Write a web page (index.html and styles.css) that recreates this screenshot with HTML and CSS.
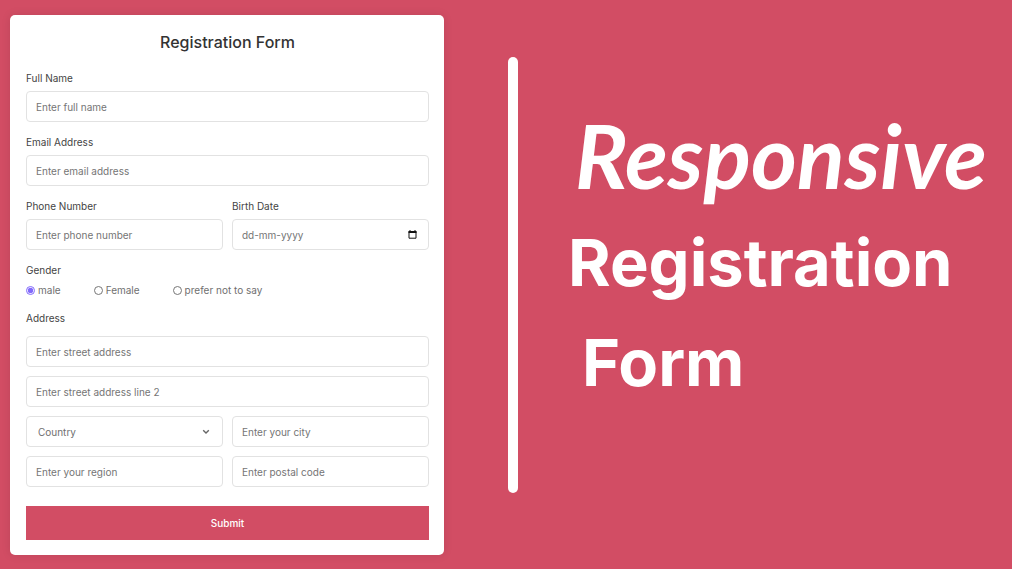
FILE: index.html
```html
<!DOCTYPE html>
<html lang="en">
<head>
<meta charset="utf-8">
<meta name="viewport" content="width=device-width, initial-scale=1">
<title>Responsive Registration Form</title>
<link rel="stylesheet" href="styles.css">
</head>
<body class="page">
<section class="card">
  <h1 class="card-title">Registration Form</h1>
  <form class="form">
    <div class="field">
      <label class="label" for="name">Full Name</label>
      <input class="control" id="name" type="text" placeholder="Enter full name">
    </div>
    <div class="field">
      <label class="label" for="email">Email Address</label>
      <input class="control" id="email" type="email" placeholder="Enter email address">
    </div>
    <div class="columns">
      <div class="field">
        <label class="label" for="phone">Phone Number</label>
        <input class="control" id="phone" type="tel" placeholder="Enter phone number">
      </div>
      <div class="field">
        <label class="label" for="birth">Birth Date</label>
        <div class="control-wrap">
          <input class="control" id="birth" type="text" placeholder="dd-mm-yyyy">
          <svg class="calendar" viewBox="0 0 9 9" aria-hidden="true"><path d="M1 1.5h7v6.700H1z" fill="none" stroke="#111"/><path d="M.5 1h8v2h-8zM1.500 0h1v1h-1zM6.500 0h1v1h-1z" fill="#111"/></svg>
        </div>
      </div>
    </div>
    <fieldset class="gender">
      <legend class="label">Gender</legend>
      <div class="options">
        <label class="option"><input class="radio" type="radio" name="gender" checked>male</label>
        <label class="option"><input class="radio" type="radio" name="gender">Female</label>
        <label class="option"><input class="radio" type="radio" name="gender">prefer not to say</label>
      </div>
    </fieldset>
    <div class="address">
      <label class="label" for="street">Address</label>
      <input class="control" id="street" type="text" placeholder="Enter street address">
      <input class="control" type="text" aria-label="Street address line 2" placeholder="Enter street address line 2">
      <div class="columns">
        <div class="control-wrap">
          <select class="control select" aria-label="Country"><option>Country</option></select>
          <svg class="chevron" viewBox="0 0 8 6" aria-hidden="true"><path d="M1.200 1.300 4 4.100l2.800-2.800" fill="none" stroke="#666" stroke-width="1.400"/></svg>
        </div>
        <input class="control" type="text" aria-label="City" placeholder="Enter your city">
      </div>
      <div class="columns">
        <input class="control" type="text" aria-label="Region" placeholder="Enter your region">
        <input class="control" type="text" aria-label="Postal code" placeholder="Enter postal code">
      </div>
    </div>
    <button class="submit" type="submit">Submit</button>
  </form>
</section>
<div class="divider"></div>
<h2 class="headline">
  <span class="line script">Responsive</span>
  <span class="line">Registration</span>
  <span class="line indent">Form</span>
</h2>
</body>
</html>
```
FILE: styles.css
```css
* { box-sizing: border-box; }
.page {
  margin: 0;
  min-height: 100vh;
  padding: 15px 10px 13px;
  display: flex;
  align-items: flex-start;
  background: #d24d64;
  font-family: Inter, "Open Sans", sans-serif;
  font-size: 10px;
}
.card {
  flex: 0 0 434px;
  padding: 15px 15px 15px 16px;
  background: #fff;
  border-radius: 5px;
  box-shadow: 0 0 10px rgba(0, 0, 0, .1);
}
.card-title {
  margin: 0 0 16px;
  font-size: 16px;
  line-height: 24px;
  font-weight: 500;
  text-align: center;
  color: #333;
}
.form { display: flex; flex-direction: column; gap: 12px; }
.field { display: flex; flex-direction: column; gap: 5px; }
.label { display: block; padding: 0; line-height: 16px; color: #444; }
.control {
  width: 100%;
  height: 31px;
  padding: 0 9px;
  border: 1px solid #e2e2e2;
  border-radius: 4px;
  background: #fff;
  font: inherit;
  color: #707070;
}
.control::placeholder { color: #757575; opacity: 1; }
.columns { display: grid; grid-template-columns: 1fr 1fr; gap: 9px; }
.control-wrap { position: relative; }
.calendar { position: absolute; right: 12px; top: 11px; width: 9px; height: 9px; }
.select { appearance: none; padding: 0 11px; }
.chevron { position: absolute; right: 13px; top: 13px; width: 8px; height: 6px; }
.gender { margin: 0; padding: 0; border: 0; min-width: 0; }
.options { display: flex; gap: 33px; padding-top: 4px; }
.option { display: flex; align-items: center; gap: 3px; line-height: 16px; color: #707070; }
.radio { width: 9px; height: 9px; margin: 0; accent-color: #826afb; }
.address { display: flex; flex-direction: column; gap: 9px; }
.address .label { margin-bottom: 1px; }
.submit {
  height: 34px;
  margin-top: 7px;
  border: 0;
  background: #d24d64;
  color: #fff;
  font: inherit;
  font-weight: 500;
}
.divider {
  flex: 0 0 10px;
  height: 436px;
  margin: 42px 50px 0 64px;
  border-radius: 5px;
  background: #fff;
}
.headline {
  margin: 82px 0 0;
  display: flex;
  flex-direction: column;
  color: #fff;
  font-size: 65px;
  line-height: 100px;
  font-weight: 700;
}
.script {
  padding-left: 7px;
  font-family: Lato, sans-serif;
  font-style: italic;
  font-size: 88px;
  line-height: 116px;
}
.indent { padding-left: 14px; }
```
